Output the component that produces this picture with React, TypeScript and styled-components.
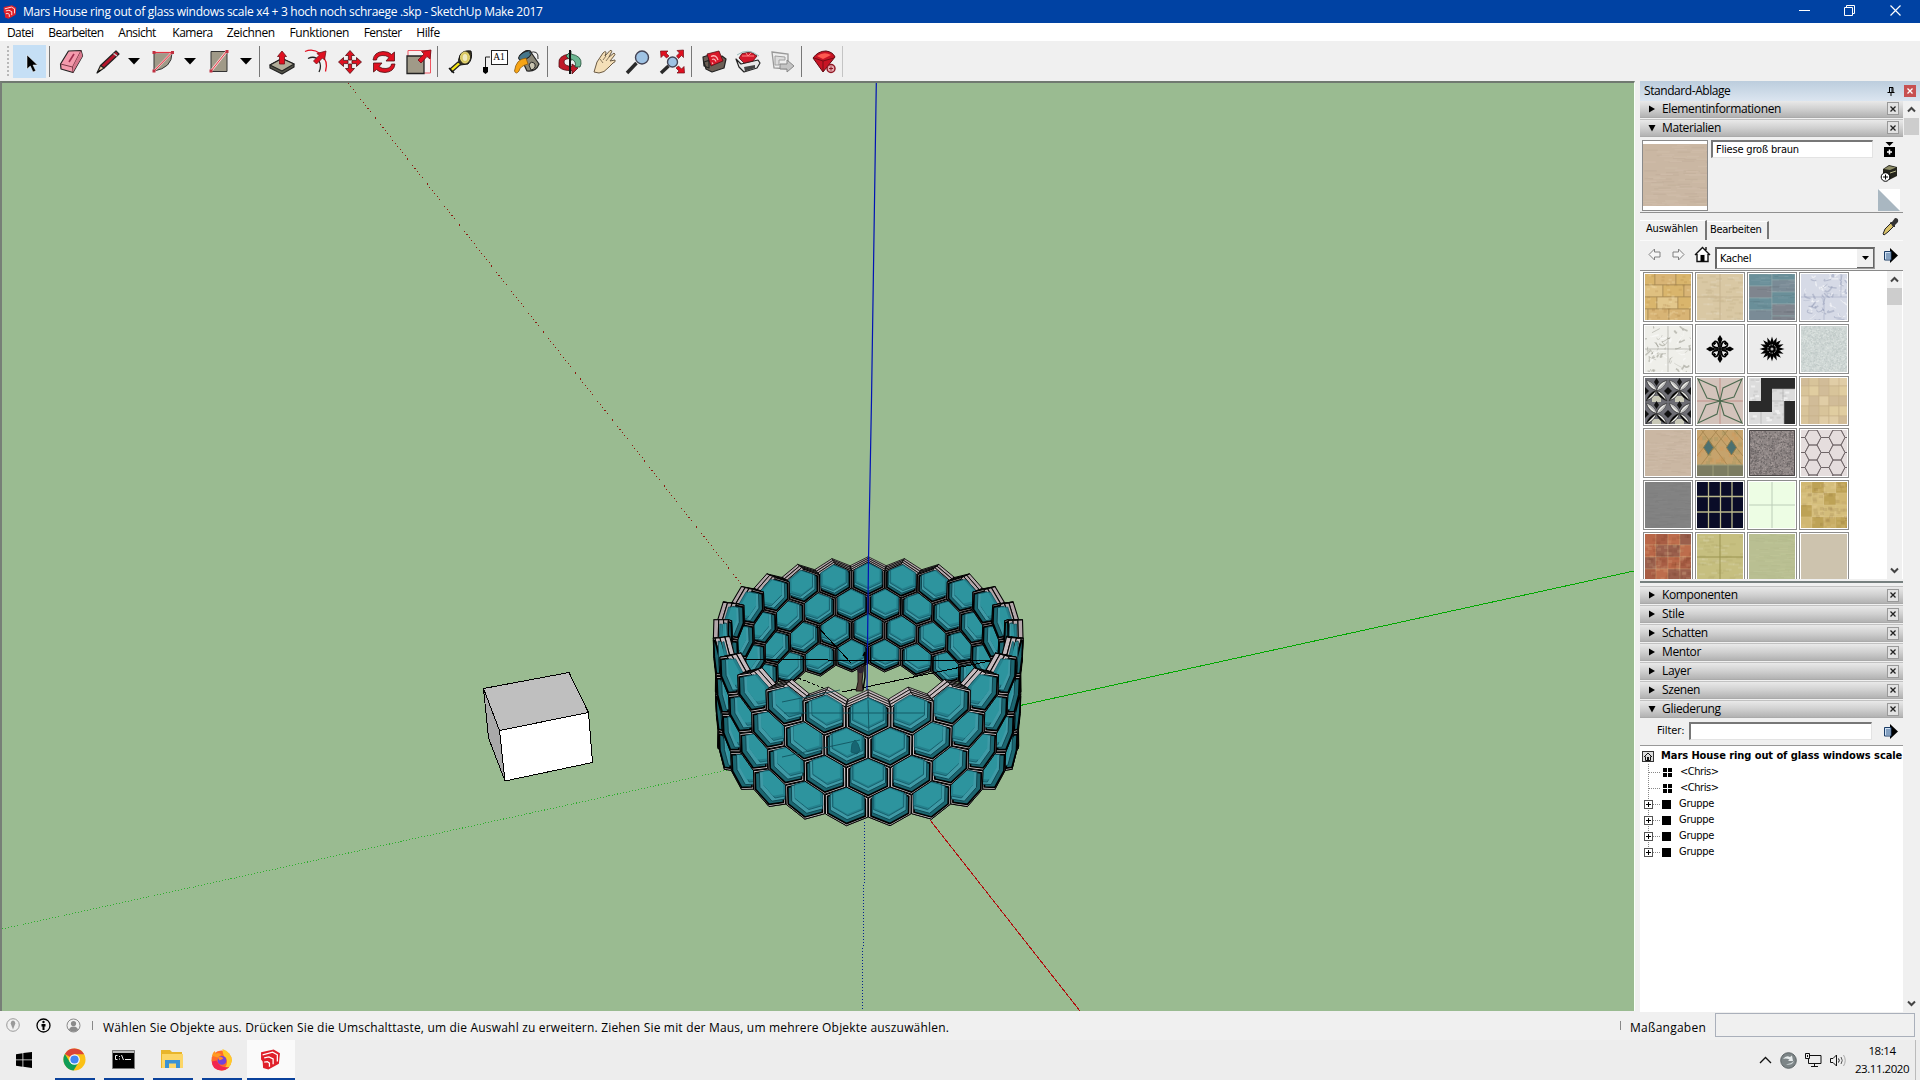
import React from "react";
import styled, { createGlobalStyle } from "styled-components";

const UI = `"Open Sans", "Noto Sans", sans-serif`;
const TAHOMA = `"DejaVu Sans Condensed", "DejaVu Sans", sans-serif`;

const Global = createGlobalStyle`
  * { box-sizing: border-box; }
  html, body { margin: 0; padding: 0; overflow: hidden; }
  body { background: #f0f0f0; color: #000; font: 12px/16px ${UI}; }
  svg { display: block; flex: none; }
`;

/* ---------- window frame ---------- */
const Screen = styled.div`
  width: 1920px; height: 1080px; display: flex; flex-direction: column; background: #f0f0f0; overflow: hidden;
`;
const Txt = styled.span<{ $ls?: number }>`
  letter-spacing: ${(p) => p.$ls ?? 0}px; white-space: pre;
`;
const TitleBar = styled.header`
  height: 23px; background: #0042a3; color: #fff; display: flex; align-items: center; padding: 0 2px 0 3px; flex: none;
`;
const TitleText = styled.div`padding-left: 6px; flex: 1; line-height: 22px;`;
const WindowButtons = styled.div`display: flex; align-items: center; height: 19px; margin-bottom: 2px;`;
const WinButton = styled.div`width: 45.5px; display: grid; place-items: center;`;
const MenuBar = styled.nav`
  height: 18px; background: #fff; display: flex; padding-left: 7px; gap: 15px; flex: none; line-height: 19px;
`;
const MenuItem = styled.div<{ $w: number }>`width: ${(p) => p.$w}px; white-space: nowrap;`;
const ToolBar = styled.div`height: 40px; display: flex; align-items: center; flex: none; padding-top: 1px;`;
const Grip = styled.div`
  width: 13px; height: 32px; padding-left: 7px;
  &::before { content: ""; display: block; width: 2px; height: 32px; background: repeating-linear-gradient(#b8b8b8 0 2px, transparent 2px 4px); }
`;
const Tool = styled.div<{ $w?: number; $on?: boolean }>`
  width: ${(p) => p.$w ?? 34}px; height: 33px; display: grid; place-items: center;
  background: ${(p) => (p.$on ? "#c5dff5" : "transparent")};
`;
const Sep = styled.div<{ $l: number; $r: number; $c?: string }>`
  width: 1px; height: 31px; background: ${(p) => p.$c ?? "#777"}; margin: 0 ${(p) => p.$r}px 0 ${(p) => p.$l}px;
`;
const Main = styled.div`height: 931px; display: flex; flex: none;`;
const Viewport = styled.div`
  width: 1635px; height: 930px; border-top: 2px solid #707970; border-left: 2px solid #777f77; background: #9abb91;
  border-right: 1px solid #f8fff8; overflow: hidden;
`;
const StatusBar = styled.footer`height: 28px; display: flex; align-items: center; flex: none; padding: 0 5px 0 0;`;
const StatusIcon = styled.div`width: 30px; padding-left: 6px; margin-top: -2px;`;
const Tick = styled.div`width: 1px; height: 9px; background: #888; margin: -2px 0 0 2px;`;
const StatusText = styled.div`margin-left: 10px; flex: 1; padding-top: 3px; line-height: 20px;`;
const Measure = styled.div`width: 76px; margin: 0 9px 0 9px; padding-top: 3px; line-height: 20px;`;
const MeasureBox = styled.div`width: 200px; height: 24px; border: 1px solid #aab0bb; margin-bottom: 2px;`;
const TaskBar = styled.div`height: 40px; background: #ededed; display: flex; flex: none; align-items: stretch;`;
const Start = styled.div`width: 55px; display: grid; place-items: center; padding-right: 7px;`;
const TaskButton = styled.div<{ $active?: boolean }>`
  width: ${(p) => (p.$active ? 48 : 40)}px; margin-right: ${(p) => (p.$active ? 0 : 9)}px; margin-left: ${(p) => (p.$active ? -4 : 0)}px;
  display: grid; place-items: center; border-bottom: 2px solid #0a429c; padding-right: 1px;
  background: ${(p) => (p.$active ? "#fafafa" : "transparent")};
`;
const TrayIcons = styled.div`margin-left: auto; display: flex; align-items: center; gap: 8px; padding-right: 8px;`;
const Clock = styled.div`
  width: 54px; margin-right: 6px; display: flex; flex-direction: column; align-items: center; justify-content: center;
  font-size: 11.5px; line-height: 18px;
`;
const PeekLine = styled.div`width: 5px; border-left: 1px solid #bbb;`;

/* ---------- tray ---------- */
const Tray = styled.aside`width: 280px; margin-left: 5px; display: flex; flex-direction: column;`;
const TrayHead = styled.div`
  height: 19.6px; background: linear-gradient(#bccddd, #dbe5f0); display: flex; align-items: center; padding: 1px 4px 0;
`;
const TrayHeadTitle = styled.div`flex: 1;`;
const CloseRed = styled.div`
  width: 12px; height: 12px; background: #c75050; display: grid; place-items: center; margin-left: 9px;
`;
const TrayBody = styled.div`display: flex; flex: 1; min-height: 0;`;
const Sections = styled.div`width: 263px; display: flex; flex-direction: column; overflow: hidden;`;
const ScrollCol = styled.div<{ $w: number }>`
  width: ${(p) => p.$w}px; background: #f0f0f0; display: flex; flex-direction: column; align-items: center;
`;
const Arrow = styled.div`height: 17px; display: grid; place-items: center;`;
const Thumb = styled.div`width: 15px; height: 17px; background: #cdcdcd;`;
const Grow = styled.div`flex: 1;`;
const SectionHead = styled.div`
  height: 17.7px; margin-bottom: 1.3px; border-bottom: 1px solid #aaa; background: linear-gradient(#e9e9e9, #d0d0d0 50%, #b2b2b2);
  display: flex; align-items: center; padding: 0 4px 0 9px; flex: none; line-height: 16px;
  box-shadow: 0 -1px 0 #c2c2c2;
`;
const SectionTitle = styled.div`margin-left: 7px; flex: 1;`;
const SectionClose = styled.div`
  width: 12px; height: 13px; border: 1px solid #999; background: #e2e2e2; display: grid; place-items: center;
`;
const MatTop = styled.div`height: 74.6px; display: flex; padding: 1.6px 0 0 2px; border-bottom: 1px solid #909090; flex: none;`;
const Preview = styled.div`width: 66px; height: 71px; border: 1px solid #8a8a8a; background: #fff; padding: 3px 0;`;
const NameInput = styled.div`
  width: 162px; height: 18px; margin-left: 3px; background: #fff; border: 1px solid #e3e3e3; border-top: 2px solid #777; border-left: 2px solid #777;
  padding: 0 3px; font: 11px/15px ${TAHOMA};
`;
const MatTools = styled.div`width: 22px; margin-left: 5px; display: flex; flex-direction: column; align-items: center; gap: 7px; padding-top: 1px;`;
const Tabs = styled.div`height: 27px; display: flex; align-items: flex-end; font: 11px/16px ${TAHOMA}; flex: none; padding-right: 4px;`;
const Tab = styled.div<{ $w: number; $h: number; $p: number }>`
  width: ${(p) => p.$w}px; height: ${(p) => p.$h}px; padding-left: ${(p) => p.$p}px; border-right: 2px solid #777; border-top: 1px solid #fff;
  margin-bottom: ${(p) => (p.$h > 18 ? 0 : 1)}px;
`;
const NavRow = styled.div`
  height: 31px; display: flex; align-items: center; flex: none; padding: 0 4px 0 2px; border-bottom: 1px solid #8a8a8a; border-top: 1px solid #fafafa;
`;
const NavIcon = styled.div`width: 24px; display: grid; justify-content: center; padding-bottom: 2px;`;
const Combo = styled.div`
  width: 160px; height: 22px; margin: 5px 0 0 1px; background: #fff; border: 1px solid #999; border-top: 2px solid #666; border-left: 2px solid #666;
  display: flex; font: 11px/20px ${TAHOMA}; padding-left: 3px; justify-content: space-between;
`;
const ComboBtn = styled.div`width: 17px; background: #f0f0f0; border-right: 1px solid #666; border-bottom: 1px solid #666; display: grid; place-items: center;`;
const SwatchArea = styled.div`height: 308px; display: flex; background: #fff; flex: none; overflow: hidden;`;
const SwatchGrid = styled.div`
  width: 247px; padding: 1px 0 0 3px; display: grid; grid-template-columns: repeat(4, 50px); grid-auto-rows: 50px; gap: 2px; overflow: hidden;
`;
const Swatch = styled.div`border: 1px solid #8c8c8c; padding: 1px; display: grid; place-items: center; background: #fff;`;
const Split = styled.div`height: 6px; border-top: 2px solid #77807f; background: #f0f0f0; flex: none; margin-top: 1.6px;`;
const FilterRow = styled.div`
  height: 26.7px; display: flex; align-items: center; font: 11px/14px ${TAHOMA}; padding: 0 4px 2px 17px; flex: none; border-bottom: 1px solid #999;
`;
const FilterInput = styled.div`
  width: 184px; height: 18px; margin: 0 12px 0 4px; background: #fff; border: 1px solid #e3e3e3; border-top: 2px solid #777; border-left: 2px solid #777;
`;
const Tree = styled.div`flex: 1; background: #fff; padding-top: 2px; font: 11px/16px ${TAHOMA}; overflow: hidden;`;
const TreeRow = styled.div<{ $bold?: boolean }>`
  height: 16px; display: flex; align-items: center; white-space: nowrap; font-weight: ${(p) => (p.$bold ? 700 : 400)};
`;
const TreeIcon = styled.div<{ $w: number }>`width: ${(p) => p.$w}px; height: 16px; flex: none;`;

/* ---------- 3D model ---------- */
type P3 = [number, number, number];
const TILT = (29.6 * Math.PI) / 180;
const CO = Math.cos(TILT);
const SI = Math.sin(TILT);
const DIST = 8.28;
const FOCAL = 150.3 * DIST;
const project = ([x, y, z]: P3): [number, number] => {
  const d = DIST + z * CO - y * SI * 0.6;
  return [868.2 + (FOCAL * x) / d, 679.5 - (FOCAL * (y * CO + z * SI)) / d];
};
const COUNT = 24;
const STEP = (2 * Math.PI) / COUNT;
const SIDE = 0.1395;

const ringPoint = (a: number, y: number, r: number): P3 => [Math.sin(a) * r, y, Math.cos(a) * r];
const hexCorners = (a: number, y: number, r: number, k: number): P3[] =>
  [0, 1, 2, 3, 4, 5].map((i) => {
    const t = (i * Math.PI) / 3;
    return ringPoint(a + Math.sin(t) * (STEP / Math.sqrt(3)) * k, y + Math.cos(t) * SIDE * k, r);
  });
const pts = (list: P3[]) => list.map((p) => project(p).map((n) => n.toFixed(1)).join(",")).join(" ");

const R_IN = 0.915;
const R_OUT = 1.01;

function HexCell({ a, y }: { a: number; y: number }) {
  const back = Math.cos(a) > -0.08;
  const near = back ? R_IN : R_OUT;
  const far = back ? R_OUT : R_IN;
  const lerp = (t: number) => near + (far - near) * t;
  const side = Math.abs(Math.sin(a));
  const faces = [1, 0.67, 0.33, 0].map((t) => hexCorners(a, y, lerp(t), 0.98));
  const order = [2, 3, 1, 4, 0, 5].map((i) => [i, (i + 1) % 6]);
  const wall = back ? "#b3a6aa" : "#c6babe";
  return (
    <g strokeLinejoin="round">
      {order.map(([i, j]) => (
        <g key={i}>
          {[0, 1, 2].map((s) => (
            <polygon key={s} points={pts([faces[s][i], faces[s][j], faces[s + 1][j], faces[s + 1][i]])} fill={wall} stroke="#000" strokeWidth={0.7 + side * 0.4} />
          ))}
        </g>
      ))}
      <polygon points={pts(hexCorners(a, y, near, 0.98))} fill={back ? "#a79c9f" : "#d8ced1"} stroke="#000" strokeWidth={1} />
      <polygon points={pts(hexCorners(a, y, near, 0.87))} fill="#1c6670" stroke="#000" strokeWidth={1.7} />
      <polygon points={pts(hexCorners(a, y, lerp(0.3), 0.81))} fill="#3f9aa6" stroke="#0b3f49" strokeWidth={0.9} />
      <polygon points={pts(hexCorners(a, y, lerp(0.6), 0.75))} fill="#25808c" stroke="#125662" strokeWidth={0.8} />
      <polygon points={pts(hexCorners(a, y + 0.014, lerp(0.4), 0.66))} fill="#2d949e" stroke="none" />
    </g>
  );
}

type Cell = { a: number; y: number; z: number; row: number };
const cells: Cell[] = [];
for (let row = 0; row < 4; row++)
  for (let i = 0; i < COUNT; i++) {
    const a = (i + (row % 2 ? 0.5 : 0)) * STEP;
    cells.push({ a, y: (1.5 - row) * SIDE * 1.5, z: Math.cos(a), row });
  }
const paintOrder = (p: Cell, q: Cell) => q.row - p.row || q.z - p.z;
const backCells = cells.filter((c) => c.z > -0.08).sort(paintOrder);
const frontCells = cells.filter((c) => c.z <= -0.08).sort(paintOrder);

function Scene() {
  return (
    <svg width="1632" height="928" viewBox="2 83 1632 928">
      <g fill="none" strokeWidth="1" shapeRendering="crispEdges">
        <path d="M348 83L742 585" stroke="#8b1a10" strokeDasharray="1 3" />
        <path d="M2 929L727 770" stroke="#2fae2f" strokeDasharray="1 2" />
        <path d="M1018 706L1634 571" stroke="#00a800" />
        <path d="M930 820L1080 1011" stroke="#b01010" />
        <path d="M865 822L862 1011" stroke="#00208c" strokeDasharray="1 2" />
      </g>
      <g stroke="#000" strokeWidth="1" strokeLinejoin="round" shapeRendering="crispEdges">
        <path d="M483.5 688.5L569 672.5L588.5 712.5L499.5 730.5Z" fill="#bfbfbf" />
        <path d="M483.5 688.5L499.5 730.5L505 781L488.5 738Z" fill="#a9a9a9" />
        <path d="M499.5 730.5L588.5 712.5L592.5 762.5L505 781Z" fill="#fff" />
      </g>
      {backCells.map((c) => (
        <HexCell key={c.row + "-" + c.a} a={c.a} y={c.y} />
      ))}
      <g stroke="#000" strokeWidth="1" fill="none" shapeRendering="crispEdges">
        <path d="M745 659.5L990 661" />
        <path d="M817 626L851 663" />
        <path d="M842 692L990 661" />
        <path d="M798 678L828 690" strokeDasharray="3 2" />
      </g>
      <path d="M876.3 83L871.5 400L868.5 560L867 690" stroke="#0012b4" strokeWidth="1.2" fill="none" />
      <path d="M863 656L865 652V677L863 690" stroke="#000" strokeWidth="1.5" fill="none" />
      <path d="M858 669L863.500 666L862 682L863 691H856L858 682Z" fill="#54413c" stroke="#1c1514" strokeWidth="1" />
      <circle cx="860.5" cy="670" r="3.2" fill="#2d2430" />
      {frontCells.map((c) => (
        <HexCell key={c.row + "-" + c.a} a={c.a} y={c.y} />
      ))}
      <g stroke="#0f4f5a" strokeWidth="1" fill="none" opacity="0.8">
        <path d="M868 700L869 735" />
        <path d="M782 702L840 690" />
        <path d="M784 713H925" />
        <path d="M782 757L860 740" />
        <path d="M851 752L852 744L855 740L858 744L860 750L857 754Z" fill="#125a68" />
      </g>
    </svg>
  );
}

/* ---------- tool icons ---------- */
const K = { stroke: "#222", strokeWidth: 1.2, strokeLinejoin: "round" as const };
const R = "#e01020";
const Icon = ({ children, s = 30 }: { children: React.ReactNode; s?: number }) => (
  <svg width={s} height={s} viewBox="0 0 30 30" fill="none">{children}</svg>
);
const Cursor = () => <Icon><path d="M12 8V22L15.300 19L18 25L20.800 23.800L18 18H22.500Z" fill="#000" stroke="#fff" strokeWidth=".5" /></Icon>;
const Eraser = () => (
  <Icon>
    <path d="M12.500 4L25 3.500L26.500 9L17 25.500L5 22L4.500 17Z" fill="#f49aac" {...K} />
    <path d="M4.500 17L16.500 20L25 3.500M16.500 20L17 25.500" stroke="#7c3a48" />
    <path d="M17 25L26.500 9L25 4L17 20Z" fill="#d9788d" />
    <path d="M13 15L18 7" stroke="#a03050" strokeWidth="1.6" />
  </Icon>
);
const Pencil = () => (
  <Icon>
    <path d="M23 4L26 7L11 21L7.500 18.500Z" fill="#b5162b" {...K} />
    <path d="M7.500 18.500L11 21L4 26Z" fill="#e8c9a0" {...K} />
    <path d="M7 22.500L4 26L8 23.500Z" fill="#000" />
    <path d="M20.500 6.500L24 9" stroke="#ccc" strokeWidth="1.5" />
  </Icon>
);
const Down = () => <svg width="12" height="8" viewBox="0 0 12 8"><path d="M0 0H12L6 6.500Z" /></svg>;
const Arc = () => (
  <Icon>
    <path d="M7 6H25Q25 21 7 24Z" fill="#a09a88" stroke="#333" />
    <path d="M7 5.500H25L7 24" stroke="#f6c4c8" strokeWidth="2" /><path d="M7 24L25 5.500H7" stroke={R} strokeWidth=".8" />
    <path d="M5.500 4h3v3h-3zM24 4h3v3h-3zM5.500 22.500h3v3h-3z" fill="#c03040" />
  </Icon>
);
const Rect = () => (
  <Icon>
    <path d="M8 4.500H24V24.500H8Z" fill="#a09a88" stroke="#333" />
    <path d="M8 24L24 4" stroke="#fbdada" strokeWidth="2.400" /><path d="M8 24L24 4" stroke={R} strokeWidth=".8" />
    <path d="M6.500 22.500h3v3h-3zM22.500 3h3v3h-3z" fill="#c03040" />
  </Icon>
);
const PushPull = () => (
  <Icon>
    <path d="M3 18L15 11.500L27 17V20L15 27L3 21Z" fill="#55554a" {...K} />
    <path d="M3 18L15 11.500L27 17L15 24Z" fill="#b1ad9a" {...K} />
    <path d="M15 4L19.500 9.500H17.500V17H12.500V9.500H10.500Z" fill={R} stroke="#701018" strokeWidth=".8" />
  </Icon>
);
const Offset = () => (
  <Icon>
    <path d="M4 4.500Q12 1 19 6.500Q28 14 24.500 24.500" stroke={R} strokeWidth="1.300" />
    <path d="M7 11.500Q14 8 18 14Q21 19 18 25" stroke="#222" strokeWidth="1.300" />
    <path d="M12.500 14L18 8.500L16 6.500L25 4L23.500 13L21.500 11L15.500 17Z" fill={R} stroke="#701018" strokeWidth=".8" />
  </Icon>
);
const Move = () => (
  <Icon>
    {[0, 90, 180, 270].map((r) => (
      <path key={r} transform={`rotate(${r} 15 15)`} d="M15 3.500L19.500 8.500H16.600V13H13.400V8.500H10.500Z" fill={R} stroke="#501014" strokeWidth=".8" />
    ))}
  </Icon>
);
const Rotate = () => (
  <Icon>
    {[0, 180].map((r) => (
      <path key={r} transform={`rotate(${r} 15 15)`} d="M4 13Q5 5 14 4.500Q20 4.500 22.500 7.500L25.500 5V14H17L20 10.500Q17 8 13 8.500Q8 9 7.500 13Z" fill={R} stroke="#501014" strokeWidth=".8" />
    ))}
  </Icon>
);
const Scale = () => (
  <Icon>
    <path d="M5 3.500H27.500V26H5Z" stroke="#ee5560" fill="#f6f0f0" /><path d="M4 9H21V26.500H4Z" fill="#a09a88" stroke="#222" strokeWidth="1.300" />
    <path d="M15 13L21 7L18.500 4.500L28 3L27 12L24 9.500L18 16Z" fill={R} stroke="#701018" strokeWidth=".8" />
  </Icon>
);
const Tape = () => (
  <Icon>
    <path d="M14 8Q17 3 25 4Q27 12 22 17L14 18Q11 14 14 8Z" fill="#3a3620" stroke="#111" />
    <ellipse cx="19" cy="10.500" rx="4.500" ry="5.500" fill="#d8c860" stroke="#efe080" /><ellipse cx="19" cy="10.500" rx="2.300" ry="3.500" fill="#efeac0" />
    <path d="M15 17L6 25L4 22L12 15Z" fill="#f6e616" {...K} /><path d="M3 21L8 26" stroke="#111" strokeWidth="1.600" />
  </Icon>
);
const Label = styled.div`
  display: grid; grid-template-columns: 8px 17px; grid-template-rows: 15px 9px; font: 9.500px/12px "Liberation Serif", serif;
`;
const LabelBox = styled.div`border: 1px solid #222; background: #fff; text-align: center; grid-column: 2; grid-row: 1;`;
const LabelStem = styled.div`grid-row: 1 / 3; grid-column: 1; display: flex; align-items: flex-end; justify-content: flex-end; padding-right: 1px;`;
const TextTool = () => (
  <Label>
    <LabelStem><svg width="7" height="18" viewBox="0 0 7 18"><path d="M2.500 14V1H7" stroke="#222" fill="none" /><path d="M0 11H5V16L2.500 18L0 16Z" /></svg></LabelStem>
    <LabelBox>A1</LabelBox>
  </Label>
);
const Paint = () => (
  <Icon>
    <path d="M6 9Q11 2 16 4L25 17Q22 25 13 24Z" fill="#8a8676" {...K} /><ellipse cx="11" cy="8.500" rx="7" ry="3.500" transform="rotate(-30 11 8.500)" fill="#46768a" stroke="#222" />
    <path d="M15 6Q25 2 24 12" stroke="#333" /><path d="M15 18Q17 13 21 17Q22 22 17 23Z" fill="#c9c4b0" stroke="#222" />
    <path d="M12 11Q2 12 .5 24Q2 28 5 24Q6 19 14 17Z" fill="#f7a414" stroke="#8a5a10" strokeWidth=".8" />
  </Icon>
);
const Orbit = () => (
  <Icon>
    <path d="M14 7Q3 9 4 16V20Q8 24 17 23.500V27L23 21L17 17V19.500Q9 19 9 15Q9 12 14 11.500Z" fill="#c01a28" stroke="#501014" strokeWidth=".8" />
    <path d="M16 7Q27 9 26 17L25 20H20Q22 14 16 12V14L11 9L16 4Z" fill="#6cb792" stroke="#204a34" strokeWidth=".8" /><path d="M15 3V27" stroke="#111" strokeWidth="2" />
  </Icon>
);
const Pan = () => (
  <Icon><path d="M5 25L8 15L14 6Q17 3 17 6L16 9L21 3.500Q24 3 22 6L20 10L25 6Q27 7 25 9L21 14L26 13Q27 15 24 16L20 20Q15 26 10 26Z" fill="#f4dfb8" stroke="#6a5a44" /><path d="M14 13L17 9M17 14L20 10M11 12L14 16" stroke="#8a7a60" /></Icon>
);
const Lens = ({ x, y, r }: { x: number; y: number; r: number }) => (
  <><path d={`M${x - r + 1} ${y + r - 1}L4 26`} stroke="#2a2a2a" strokeWidth="3.500" /><circle cx={x} cy={y} r={r} fill="#9fc3e4" stroke="#445" strokeWidth="1.400" /></>
);
const Zoom = () => <Icon><Lens x={19} y={10.500} r={6.500} /></Icon>;
const ZoomAll = () => (
  <Icon>
    <Lens x={15.500} y={15} r={5} />
    {[0, 90, 180].map((r) => <path key={r} transform={`rotate(${r} 15.500 15)`} d="M3.500 4H11L9 6L12 9L9.500 11L6.500 8L4 10.500Z" fill={R} stroke="#701018" strokeWidth=".7" />)}
  </Icon>
);
const Warehouse = () => (
  <Icon>
    <path d="M4 10L10 8V21L5 19ZM23 9L27 12L25 21L13 25L7 22L5 15Z" fill="#6b5f55" {...K} />
    <path d="M8 7L20 4L24 14L12 19Z" fill="#d9182a" stroke="#501014" strokeWidth=".8" /><path d="M12 9.500Q17 7 19 13M13 12.500Q15.500 11 17 14.500M13 15.500L14 17" stroke="#ffb8b8" strokeWidth="1.300" />
  </Icon>
);
const Extension = () => (
  <Icon>
    <path d="M3 12L8 17L25 13L27 16L24 21L11 25L6 20Z" fill="#e8e8e8" {...K} /><path d="M11 20L22 18V21L12 24.500Z" fill="#444" />
    <path d="M6 11L9 6.500L18 5L24 9L20 14L11 16Z" fill="#d3182a" stroke="#501014" strokeWidth=".8" /><path d="M9 9H21M13 6L15 9L18 6" stroke="#ff8888" /><path d="M4 8Q15 0 26 9" stroke="#9bb" />
  </Icon>
);
const Layout = () => (
  <Icon>
    <path d="M5 5L21 7V22L7 21Z" fill="#eee" stroke="#999" strokeWidth="1.300" /><path d="M8 9L18 10V13H12V18H8Z" fill="#ddd" stroke="#a0a0a0" /><path d="M13 17H20V13L27 19L20 25V22H13Z" fill="#c4c4c4" stroke="#888" />
  </Icon>
);
const Ruby = () => (
  <Icon>
    <path d="M4 11Q9 4 17 4Q24 5 26 10L14 25Z" fill="#c81424" stroke="#600a12" /><path d="M8 9Q15 4 22 8L14 12Z" fill="#ff5a50" /><path d="M5 11L14 14L25 11M14 14V24" stroke="#780c16" />
    <circle cx="22" cy="21.500" r="4" fill="#e7aab0" stroke="#901824" strokeWidth="1.500" /><path d="M20 21.500H24M22 19.500V23.500" stroke="#901824" />
  </Icon>
);
const SketchUp = ({ s, c = "#e0202a" }: { s: number; c?: string }) => (
  <svg width={s} height={s} viewBox="0 0 20 20" fill="none">
    <path d="M1 3L13 .5L19 4L18 14L8 19.500L3 18L2.500 12L1 10Z" fill={c} />
    <path d="M2.500 5.500L12 3L16.500 5.500V12M4 8.500L8.500 7.500L12.500 9.500V14.500M4 12.500L7 12L9 13.500V17" stroke="#fff" strokeWidth="1.200" />
  </svg>
);

/* ---------- material textures ---------- */
const rng = (seed: number) => () => ((seed = (seed * 16807) % 2147483647) & 0xffff) / 65536;
type Tex = { base: string; kind: string; alt?: string[]; line?: string };
const textures: Tex[] = [
  { base: "#dcb873", kind: "brick", alt: ["#dfc080", "#d8b475", "#e2c78c", "#d9b56c"], line: "#a88b55" },
  { base: "#d9c8a4", kind: "cross", line: "#c7b48f" },
  { base: "#6f8f99", kind: "slabs", alt: ["#5d8896", "#7a8b96", "#6a8f99", "#7f858e"], line: "#8ea5a9" },
  { base: "#d6dae6", kind: "marble", line: "#959eb8" },
  { base: "#efefea", kind: "marble", line: "#8f8f84" },
  { base: "#ececec", kind: "fleur" },
  { base: "#ececec", kind: "sun" },
  { base: "#ced6d4", kind: "noise", alt: ["#c0cac8", "#dbe2df"] },
  { base: "#6d6d74", kind: "petals" },
  { base: "#d3c3bb", kind: "star" },
  { base: "#dcdcdc", kind: "bw" },
  { base: "#ddc9a0", kind: "grid6", alt: ["#e0cda6", "#d8c49a", "#d1bc98", "#e0cda0"] },
  { base: "#cab7a3", kind: "streak", alt: ["#c5b29e", "#cebba8"] },
  { base: "#c6a36c", kind: "diamond" },
  { base: "#8f8786", kind: "noise", alt: ["#787070", "#a69c9a", "#6a6464"] },
  { base: "#e5dddd", kind: "hex" },
  { base: "#828282", kind: "streak", alt: ["#7f7f7f", "#858585"] },
  { base: "#0a0c28", kind: "navy" },
  { base: "#edfde4", kind: "cross", line: "#bccdb8" },
  { base: "#cdb26c", kind: "grid4", alt: ["#d0b772", "#c8ad65", "#bda256", "#d4bd7b"] },
  { base: "#b4603f", kind: "grid4", alt: ["#b96748", "#a85d44", "#9a5f4c", "#bd6d4c"] },
  { base: "#c6bf80", kind: "cross", line: "#9b9450" },
  { base: "#b9bf92", kind: "streak", alt: ["#b6bc8f", "#bdc396"] },
  { base: "#cdc3ae", kind: "plain" },
];

function Texture({ t, seed, w = 46, h = 46 }: { t: Tex; seed: number; w?: number; h?: number }) {
  const r = rng(seed * 7919 + 31);
  const out: React.ReactNode[] = [];
  let key = 0;
  const rect = (x: number, y: number, a: number, b: number, fill: string, stroke?: string) =>
    out.push(<rect key={key++} x={x} y={y} width={a} height={b} fill={fill} stroke={stroke} strokeWidth=".7" />);
  const path = (d: string, stroke: string, fill = "none", sw = 1, tr?: string) =>
    out.push(<path key={key++} d={d} stroke={stroke} fill={fill} strokeWidth={sw} transform={tr} />);
  const pick = () => t.alt![Math.floor(r() * t.alt!.length)];
  const grain = (n: number, cols: string[], aw: number, ah: number) => {
    for (let i = 0; i < n; i++) rect(r() * 46, r() * 46, aw, ah, cols[Math.floor(r() * cols.length)]);
  };
  if (t.kind === "brick") {
    for (let j = 0; j < 4; j++) for (let i = -1; i < 3; i++) rect(i * 21 + [10, -3, 12, 3][j], j * 12 - 1, 21, 12, pick(), t.line);
    grain(70, ["rgba(255,240,200,.2)", "rgba(150,100,40,.12)"], 3, 2);
  }
  if (t.kind === "cross") {
    if (t.base !== "#edfde4") grain(60, ["rgba(255,255,255,.1)", "rgba(90,80,20,.05)"], 6, 2);
    path("M23 0V46M0 23H46", t.line!);
  }
  if (t.kind === "slabs") {
    for (let i = 0; i < 2; i++) for (let j = 0; j < 5; j++) rect(i * 23, j * 12 - i * 6, 23, 12, pick(), t.line);
    grain(60, ["rgba(255,255,255,.07)", "rgba(0,0,0,.05)"], 10, 1);
  }
  if (t.kind === "marble") {
    for (let i = 0; i < 60; i++) {
      const x = r() * 46, y = r() * 46;
      out.push(<path key={key++} d={`M${x} ${y}q${r() * 8 - 4} ${r() * 6} ${r() * 10 - 2} ${r() * 10 - 5}`} stroke={r() > 0.4 ? t.line : "#fff"} strokeWidth={0.5 + r() * 1.3} opacity=".5" fill="none" />);
    }
    path(seed === 4 ? "M0 23H46M23 23V46M40 0V23" : "M0 23H46M23 0V46", t.line!, "none", 0.5);
  }
  if (t.kind === "noise") {
    grain(900, t.alt!, 1.2, 1.2);
    if (seed === 15) path("M.5.5H45.500V45.500H.5Z", "#4d4848");
  }
  if (t.kind === "streak") grain(110, t.alt!, 9, 1);
  if (t.kind === "grid6")
    for (let i = 0; i < 5; i++) for (let j = 0; j < 5; j++) rect(i * 10 - 2, j * 10 - 2, 10 + (r() > 0.6 ? 8 : 0), 10, pick(), "#c8b48c");
  if (t.kind === "grid4") {
    for (let i = 0; i < 4; i++) for (let j = 0; j < 4; j++) rect(i * 12 - 1, j * 12 - 1, 12, 12, pick(), "rgba(230,210,160,.3)");
    grain(90, ["rgba(255,230,180,.12)", "rgba(60,30,0,.08)"], 4, 3);
  }
  if (t.kind === "navy") path("M11.500 0V46M23.500 0V46M35 0V46M0 14.500H46M0 30H46", "#b9b78b", "none", 1.3);
  if (t.kind === "hex")
    for (let i = -1; i < 5; i++) for (let j = -1; j < 4; j++)
      path("M-8 0L-4 -7.500H4L8 0L4 7.500H-4Z", "#6a5f62", "none", 0.8, `translate(${i * 12} ${j * 15 + (i % 2 ? 7.5 : 0)})`);
  if (t.kind === "fleur") {
    [0, 90, 180, 270].forEach((a) => {
      path("M23 9L25.500 13L23.800 17.500V23H22.200V17.500L20.500 13Z", "none", "#000", 1, `rotate(${a} 23 23)`);
      path("M24 21.500Q24.500 15 28 15.500Q30 17 28 18.500", "#000", "none", 1.8, `rotate(${a} 23 23)`);
      path("M22 21.500Q21.500 15 18 15.500Q16 17 18 18.500", "#000", "none", 1.8, `rotate(${a} 23 23)`);
    });
  }
  if (t.kind === "sun") {
    for (let i = 0; i < 16; i++) path("M21 17L23 10.500L25 17Z", "none", "#000", 1, `rotate(${i * 22.5} 23 23)`);
    out.push(<circle key={key++} cx="23" cy="23" r="7" fill="#000" />);
    out.push(<circle key={key++} cx="23" cy="23" r="4.200" fill="none" stroke="#bbb" strokeDasharray="1.5 1.2" />);
    out.push(<circle key={key++} cx="23" cy="23" r="1.500" fill="#bbb" />);
  }
  if (t.kind === "petals")
    [[0, 0], [23, 0], [0, 23], [23, 23]].forEach(([x, y]) => {
      const tr = (a: number) => `translate(${x} ${y + 1}) rotate(${a} 11.500 11.500)`;
      rect(x + 7, y + 18, 9, 6, "#c9c9b8");
      path("M0 8L4 12L0 16ZM23 8L19 12L23 16ZM11.500 -1L14 3L11.500 7L9 3Z", "none", "#111", 1, tr(0));
      [45, 135, 225, 315].forEach((a) => {
        path("M11.500 11.500Q15.500 5 11.500 -3Q7.500 5 11.500 11.500Z", "#222", "#f0f0ec", 0.7, tr(a));
        path("M11.500 11.500Q15.500 5 11.500 -3Z", "none", a > 90 && a < 270 ? "#000" : "#bbb", 1, tr(a));
      });
    });
  if (t.kind === "star") {
    path("M23 0V46M0 23H46", "#c28f88");
    [0, 90, 180, 270].forEach((a) => path("M23 23L26 10L45 1L37 19Z", "#4d6a50", "none", 1.1, `rotate(${a} 23 23)`));
  }
  if (t.kind === "bw") {
    grain(70, ["#efefef", "#cfcfcf"], 4, 2);
    [[12, 0, 11, 23], [23, 0, 23, 11], [0, 23, 23, 11], [35, 23, 11, 23]].forEach(([x, y, a, b]) => rect(x, y, a, b, "#2a2a2a"));
    path("M23 23H35V46M12 34V46M23 11H46M34 11V23", "#aaa", "none", 0.6);
  }
  if (t.kind === "diamond") {
    path("M0 10L12 -6L46 36M0 26L23 -3L46 26M0 -6L34 40M0 40L34 -4L46 10", "#a5844e", "none", 0.8);
    grain(60, ["rgba(220,150,80,.3)", "rgba(120,140,90,.18)"], 4, 4);
    path("M11.500 10L16.500 17.500L11.500 25L6.500 17.500ZM34.500 10L39.500 17.500L34.500 25L29.500 17.500Z", "#8a7a4c", "#4c7070");
    rect(0, 35, 46, 11, "#7c7c62");
    path("M0 35H46M16 35V46M31 35V46", "#9c9b78");
  }
  return (
    <svg width={w} height={h} viewBox="0 0 46 46" preserveAspectRatio="none">
      <rect width="46" height="46" fill={t.base} />
      {out}
    </svg>
  );
}

/* ---------- small glyphs ---------- */
const Chevron = ({ up }: { up?: boolean }) => (
  <svg width="9" height="7" viewBox="0 0 9 7"><path d={up ? "M1 5.500L4.500 2L8 5.500" : "M1 1.500L4.500 5L8 1.500"} stroke="#444" strokeWidth="2" fill="none" /></svg>
);
const CrossMark = ({ c = "#222", s = 6 }: { c?: string; s?: number }) => (
  <svg width={s} height={s} viewBox="0 0 6 6"><path d="M.5.5L5.500 5.500M5.500.5L.5 5.500" stroke={c} strokeWidth="1.300" /></svg>
);
const Export = () => (
  <svg width="15" height="15" viewBox="0 0 15 15"><path d="M6 0L14 7.500L6 15Z" /><path d="M.5 3.500H7V12H.5Z" fill="#cfe0f4" stroke="#1b3d66" /><path d="M2 6H6M2 8H6M2 10H6" stroke="#38608c" /></svg>
);
const House = () => (
  <svg width="17" height="17" viewBox="0 0 17 17"><path d="M1 9L8.500 1.500L16 9M3 8V15.500H14V8M12 1V4" stroke="#111" strokeWidth="1.400" fill="#fff" /><path d="M6.500 9H10.500V15.500H6.500Z" /></svg>
);
const NavArrow = ({ flip }: { flip?: boolean }) => (
  <svg width="13" height="13" viewBox="0 0 13 13"><path transform={flip ? "rotate(180 6.500 6.500)" : undefined} d="M1 6.500L6.500 1V4H12V9H6.500V12Z" fill="#f6f6f6" stroke="#808080" /></svg>
);

const Section = ({ name, open, ls }: { name: string; open?: boolean; ls: number }) => (
  <SectionHead>
    <svg width="6" height="8" viewBox="0 0 6 8" overflow="visible"><path d={open ? "M-.5 1H6.500L3 7.500Z" : "M0 .5L6 4L0 7.500Z"} /></svg>
    <SectionTitle><Txt $ls={ls}>{name}</Txt></SectionTitle>
    <SectionClose><CrossMark /></SectionClose>
  </SectionHead>
);

const Leaf = ({ group, last, label }: { group?: boolean; last?: boolean; label: string }) => (
  <TreeRow>
    <TreeIcon $w={group ? 39 : 40}>
      <svg width="34" height="16" viewBox="0 0 34 16" fill="none">
        <path d={`M8.500 0V${last ? 8 : 16}M9 8.500H20`} stroke="#888" strokeDasharray="1 1" />
        {group && <><rect x="4.500" y="4.500" width="8" height="8" fill="#fff" stroke="#555" /><path d="M6 8.500H11M8.500 6V11" stroke="#000" /></>}
        {group ? <rect x="22" y="4" width="9" height="9" fill="#000" /> : <path d="M23 4h4v4h-4zM28 4h4v4h-4zM23 9h4v4h-4zM28 9h4v4h-4z" fill="#000" />}
      </svg>
    </TreeIcon>
    <Txt $ls={group ? -0.28 : -0.46}>{label}</Txt>
  </TreeRow>
);

const menu: [string, number, number][] = [
  ["Datei", 26.3, -0.6], ["Bearbeiten", 55, -0.65], ["Ansicht", 39, -0.5], ["Kamera", 39.5, -0.5],
  ["Zeichnen", 47.7, -0.4], ["Funktionen", 59.3, -0.37], ["Fenster", 37.5, -0.6], ["Hilfe", 26, -0.45],
];

export default function App() {
  return (
    <Screen>
      <Global />
      <TitleBar>
        <SketchUp s={14} />
        <TitleText><Txt $ls={-0.29}>Mars House ring out of glass windows scale x4 + 3 hoch noch schraege .skp - SketchUp Make 2017</Txt></TitleText>
        <WindowButtons>
          <WinButton><svg width="11" height="11"><path d="M0 5.500H11" stroke="#fff" /></svg></WinButton>
          <WinButton><svg width="11" height="11" fill="none" stroke="#fff"><path d="M.5 2.500H8.500V10.500H.5ZM2.500 2V.5H10.500V8.500H9" /></svg></WinButton>
          <WinButton><svg width="11" height="11" stroke="#fff" strokeWidth="1.200"><path d="M.5.5L10.500 10.500M10.500.5L.5 10.500" /></svg></WinButton>
        </WindowButtons>
      </TitleBar>
      <MenuBar>
        {menu.map(([m, w, ls]) => <MenuItem key={m} $w={w}><Txt $ls={ls}>{m}</Txt></MenuItem>)}
      </MenuBar>
      <ToolBar>
        <Grip />
        <Tool $w={33} $on><Cursor /></Tool>
        <Sep $l={3} $r={4} />
        <Tool><Eraser /></Tool>
        <Tool $w={40}><Pencil /></Tool>
        <Tool $w={12}><Down /></Tool>
        <Tool $w={44}><Arc /></Tool>
        <Tool $w={12}><Down /></Tool>
        <Tool $w={44}><Rect /></Tool>
        <Tool $w={12}><Down /></Tool>
        <Sep $l={7} $r={5} />
        <Tool><PushPull /></Tool>
        <Tool><Offset /></Tool>
        <Tool><Move /></Tool>
        <Tool><Rotate /></Tool>
        <Tool><Scale /></Tool>
        <Sep $l={2} $r={6} />
        <Tool><Tape /></Tool>
        <Tool><TextTool /></Tool>
        <Tool><Paint /></Tool>
        <Sep $l={1} $r={5} />
        <Tool><Orbit /></Tool>
        <Tool><Pan /></Tool>
        <Tool><Zoom /></Tool>
        <Tool><ZoomAll /></Tool>
        <Sep $l={2} $r={5} />
        <Tool><Warehouse /></Tool>
        <Tool><Extension /></Tool>
        <Tool><Layout /></Tool>
        <Sep $l={2} $r={5} />
        <Tool><Ruby /></Tool>
        <Sep $l={1} $r={0} $c="#c4c4c4" />
      </ToolBar>
      <Main>
        <Viewport><Scene /></Viewport>
        <Tray>
          <TrayHead>
            <TrayHeadTitle><Txt $ls={-0.43}>Standard-Ablage</Txt></TrayHeadTitle>
            <svg width="8" height="9" viewBox="0 0 8 9" fill="none" stroke="#000"><path d="M2 .5H6V5M2.500 0V5M5 0V5M.5 5.500H7.500M4 5.500V9" /></svg>
            <CloseRed><CrossMark c="#fff" /></CloseRed>
          </TrayHead>
          <TrayBody>
            <Sections>
              <Section name="Elementinformationen" ls={-0.36} />
              <Section name="Materialien" open ls={-0.4} />
              <MatTop>
                <Preview><Texture t={textures[12]} seed={4} w={64} h={62} /></Preview>
                <NameInput><Txt $ls={-0.19}>Fliese groß braun</Txt></NameInput>
                <MatTools>
                  <svg width="11" height="16" viewBox="0 0 11 16"><path d="M1.500 1H9.500L5.500 5Z" /><path d="M0 6H11V16H0Z" /><path d="M3 11H8M5.500 8.500V13.500" stroke="#fff" strokeWidth="1.500" /></svg>
                  <svg width="18" height="18" viewBox="0 0 18 18"><path d="M3 5L9 1L17 3V12L9 16L3 13Z" fill="#24241c" /><path d="M4 5L9 2L16 3.500L10 6Z" fill="#8f8e68" /><path d="M10 9L16 7" stroke="#b9b88a" /><circle cx="5.500" cy="13" r="4.300" fill="#fff" stroke="#000" /><path d="M3 13H8M5.500 10.500V15.500" stroke="#000" /></svg>
                  <svg width="22" height="22" viewBox="0 0 22 22"><path d="M0 0H22V22Z" fill="#fff" /><path d="M0 0L22 22H0Z" fill="#a9b7c1" /></svg>
                </MatTools>
              </MatTop>
              <Tabs>
                <Tab $w={67} $h={20} $p={6}><Txt $ls={-0.2}>Auswählen</Txt></Tab>
                <Tab $w={62} $h={18} $p={3}><Txt $ls={-0.29}>Bearbeiten</Txt></Tab>
                <Grow />
                <svg width="17" height="22" viewBox="0 0 17 22"><path d="M1 16L3 11L9 5L12 8L6 14L2 17Z" fill="#d9c26a" stroke="#222" /><path d="M8 4L10 4L13 0Q17 0 16 4L13 7V9L11 9Z" fill="#333" /></svg>
              </Tabs>
              <NavRow>
                <NavIcon><NavArrow /></NavIcon>
                <NavIcon><NavArrow flip /></NavIcon>
                <NavIcon><House /></NavIcon>
                <Combo><Txt $ls={-0.3}>Kachel</Txt><ComboBtn><svg width="7" height="4"><path d="M0 0H7L3.500 4Z" /></svg></ComboBtn></Combo>
                <Grow />
                <Export />
              </NavRow>
              <SwatchArea>
                <SwatchGrid>
                  {textures.map((t, i) => <Swatch key={i}><Texture t={t} seed={i + 1} /></Swatch>)}
                </SwatchGrid>
                <ScrollCol $w={15}><Arrow><Chevron up /></Arrow><Thumb /><Grow /><Arrow><Chevron /></Arrow></ScrollCol>
              </SwatchArea>
              <Split />
              <Section name="Komponenten" ls={-0.4} />
              <Section name="Stile" ls={-0.3} />
              <Section name="Schatten" ls={-0.4} />
              <Section name="Mentor" ls={-0.4} />
              <Section name="Layer" ls={-0.3} />
              <Section name="Szenen" ls={-0.4} />
              <Section name="Gliederung" open ls={-0.3} />
              <FilterRow><Txt $ls={0}>Filter:</Txt><FilterInput /><Grow /><Export /></FilterRow>
              <Tree>
                <TreeRow $bold>
                  <TreeIcon $w={21}>
                    <svg width="16" height="16" viewBox="0 0 16 16" fill="none"><rect x="2.500" y="3.500" width="11" height="10" fill="#ddd" stroke="#333" /><path d="M4 9L8 5L12 9M5.500 8.500V12.500H10.500V8.500" stroke="#111" /><path d="M7 9h2v3.500h-2z" fill="#111" /></svg>
                  </TreeIcon>
                  <Txt $ls={-0.07}>Mars House ring out of glass windows scale</Txt>
                </TreeRow>
                <Leaf label="<Chris>" />
                <Leaf label="<Chris>" />
                <Leaf label="Gruppe" group />
                <Leaf label="Gruppe" group />
                <Leaf label="Gruppe" group />
                <Leaf label="Gruppe" group last />
              </Tree>
            </Sections>
            <ScrollCol $w={17}><Arrow><Chevron up /></Arrow><Thumb /><Grow /><Arrow><Chevron /></Arrow></ScrollCol>
          </TrayBody>
        </Tray>
      </Main>
      <StatusBar>
        <StatusIcon><svg width="14" height="14" viewBox="0 0 14 14"><circle cx="7" cy="7" r="6.300" fill="none" stroke="#9a9a9a" /><path d="M7 2.500Q9.500 3 9.300 5.500L7 11.500L4.700 5.500Q4.500 3 7 2.500Z" fill="#9a9a9a" /></svg></StatusIcon>
        <StatusIcon><svg width="15" height="15" viewBox="0 0 15 15"><circle cx="7.500" cy="7.500" r="6.500" fill="none" stroke="#000" strokeWidth="1.300" /><circle cx="7.500" cy="4" r="1.200" /><path d="M5.500 6H9.500V8.500H8.500V12H6.500V8.500H5.500Z" /></svg></StatusIcon>
        <StatusIcon><svg width="15" height="15" viewBox="0 0 15 15"><circle cx="7.500" cy="7.500" r="6.500" fill="none" stroke="#8a8a8a" /><circle cx="7.500" cy="5.500" r="2.600" fill="#8a8a8a" /><path d="M3 12Q3.500 8.500 7.500 8.500Q11.500 8.500 12 12Q7.500 15.500 3 12Z" fill="#8a8a8a" /></svg></StatusIcon>
        <Tick />
        <StatusText><Txt $ls={0.186}>Wählen Sie Objekte aus. Drücken Sie die Umschalttaste, um die Auswahl zu erweitern. Ziehen Sie mit der Maus, um mehrere Objekte auszuwählen.</Txt></StatusText>
        <Tick />
        <Measure><Txt $ls={0.24}>Maßangaben</Txt></Measure>
        <MeasureBox />
      </StatusBar>
      <TaskBar>
        <Start><svg width="16" height="16" viewBox="0 0 16 16"><path d="M0 2.200L6.500 1.200V7.500H0ZM7.300 1.100L16 0V7.500H7.300ZM0 8.300H6.500V14.700L0 13.800ZM7.300 8.300H16V16L7.300 14.800Z" /></svg></Start>
        <TaskButton>
          <svg width="23" height="23" viewBox="0 0 24 24"><circle cx="12" cy="12" r="11.500" fill="#fbc116" /><path d="M12 12L2 6.200A11.500 11.500 0 0 1 22 6.500H12Z" fill="#db4437" /><path d="M2 6.200A11.500 11.500 0 0 0 11 23.500L16.500 14.500L7 14.500Z" fill="#0f9d58" /><circle cx="12" cy="12" r="5.500" fill="#fff" /><circle cx="12" cy="12" r="4.300" fill="#4285f4" /></svg>
        </TaskButton>
        <TaskButton>
          <svg width="23" height="19" viewBox="0 0 23 19"><path d="M.5.5H22.500V18.500H.5Z" fill="#000" stroke="#777" /><path d="M1 1H22V3H1Z" fill="#bbb" /><path d="M5.500 5.500H3.500V9.500H5.500M7.500 6V7M7.500 8.500V9.500M9.500 5L11.500 10M13 9.500H19" stroke="#eee" fill="none" /></svg>
        </TaskButton>
        <TaskButton>
          <svg width="23" height="20" viewBox="0 0 23 20"><path d="M0 1H9L11 3H21V19H0Z" fill="#e8b52c" /><path d="M1 5H22V19H1Z" fill="#fcd667" /><path d="M4 11H19V19H15V14.500H8V19H4Z" fill="#3a92d4" /></svg>
        </TaskButton>
        <TaskButton>
          <svg width="23" height="23" viewBox="0 0 24 24"><circle cx="12" cy="13" r="10.500" fill="#ff6a2b" /><path d="M13 1Q22 4 23 13Q21 23 12 23.500Q20 19 17 11Q13 8 13 1Z" fill="#ffc929" /><path d="M2 8Q3 4 5 3L6 6Q9 4 12 7L8 10Z" fill="#ff9a22" /><path d="M2 14Q2 23 12 23.500Q17 23 20 20Q10 21 7 13Z" fill="#f2264f" /><circle cx="12.500" cy="13" r="4.600" fill="#7542d8" /><path d="M8 10Q12 8 14 11L10 13Z" fill="#ff8a2a" /></svg>
        </TaskButton>
        <TaskButton $active><SketchUp s={21} /></TaskButton>
        <TrayIcons>
          <svg width="13" height="8" viewBox="0 0 13 8"><path d="M1 7L6.500 1.500L12 7" stroke="#111" strokeWidth="1.300" fill="none" /></svg>
          <svg width="17" height="17" viewBox="0 0 17 17"><circle cx="8.500" cy="8.500" r="7.800" fill="#7d8587" stroke="#5c6466" /><path d="M3 7Q6 3 10 5L12 3.500L13 9H8L9.500 7.500Q6 6 3 7Z" fill="#e6ebec" /><path d="M14 9Q12 14 6 12.500Q11 12 14 9Z" fill="#cdd5d6" /></svg>
          <svg width="17" height="15" viewBox="0 0 17 15" fill="none" stroke="#111"><path d="M5 2.500H16V10.500H3.500V6M9.500 10.500V13.500M6 13.500H13M.5.500H4.500V5.500H.5ZM2.500 2V4" /></svg>
          <svg width="17" height="13" viewBox="0 0 17 13" fill="none" stroke="#111"><path d="M.5 4.500H3L6.500 1V12L3 8.500H.5Z" /><path d="M8.500 4.500Q10 6.500 8.500 8.500" /><path d="M11 3Q13.500 6.500 11 10" stroke="#555" /><path d="M13.500 1Q17 6.500 13.500 12" stroke="#aaa" /></svg>
        </TrayIcons>
        <Clock><Txt $ls={-0.46}>18:14</Txt><Txt $ls={-0.46}>23.11.2020</Txt></Clock>
        <PeekLine />
      </TaskBar>
    </Screen>
  );
}
